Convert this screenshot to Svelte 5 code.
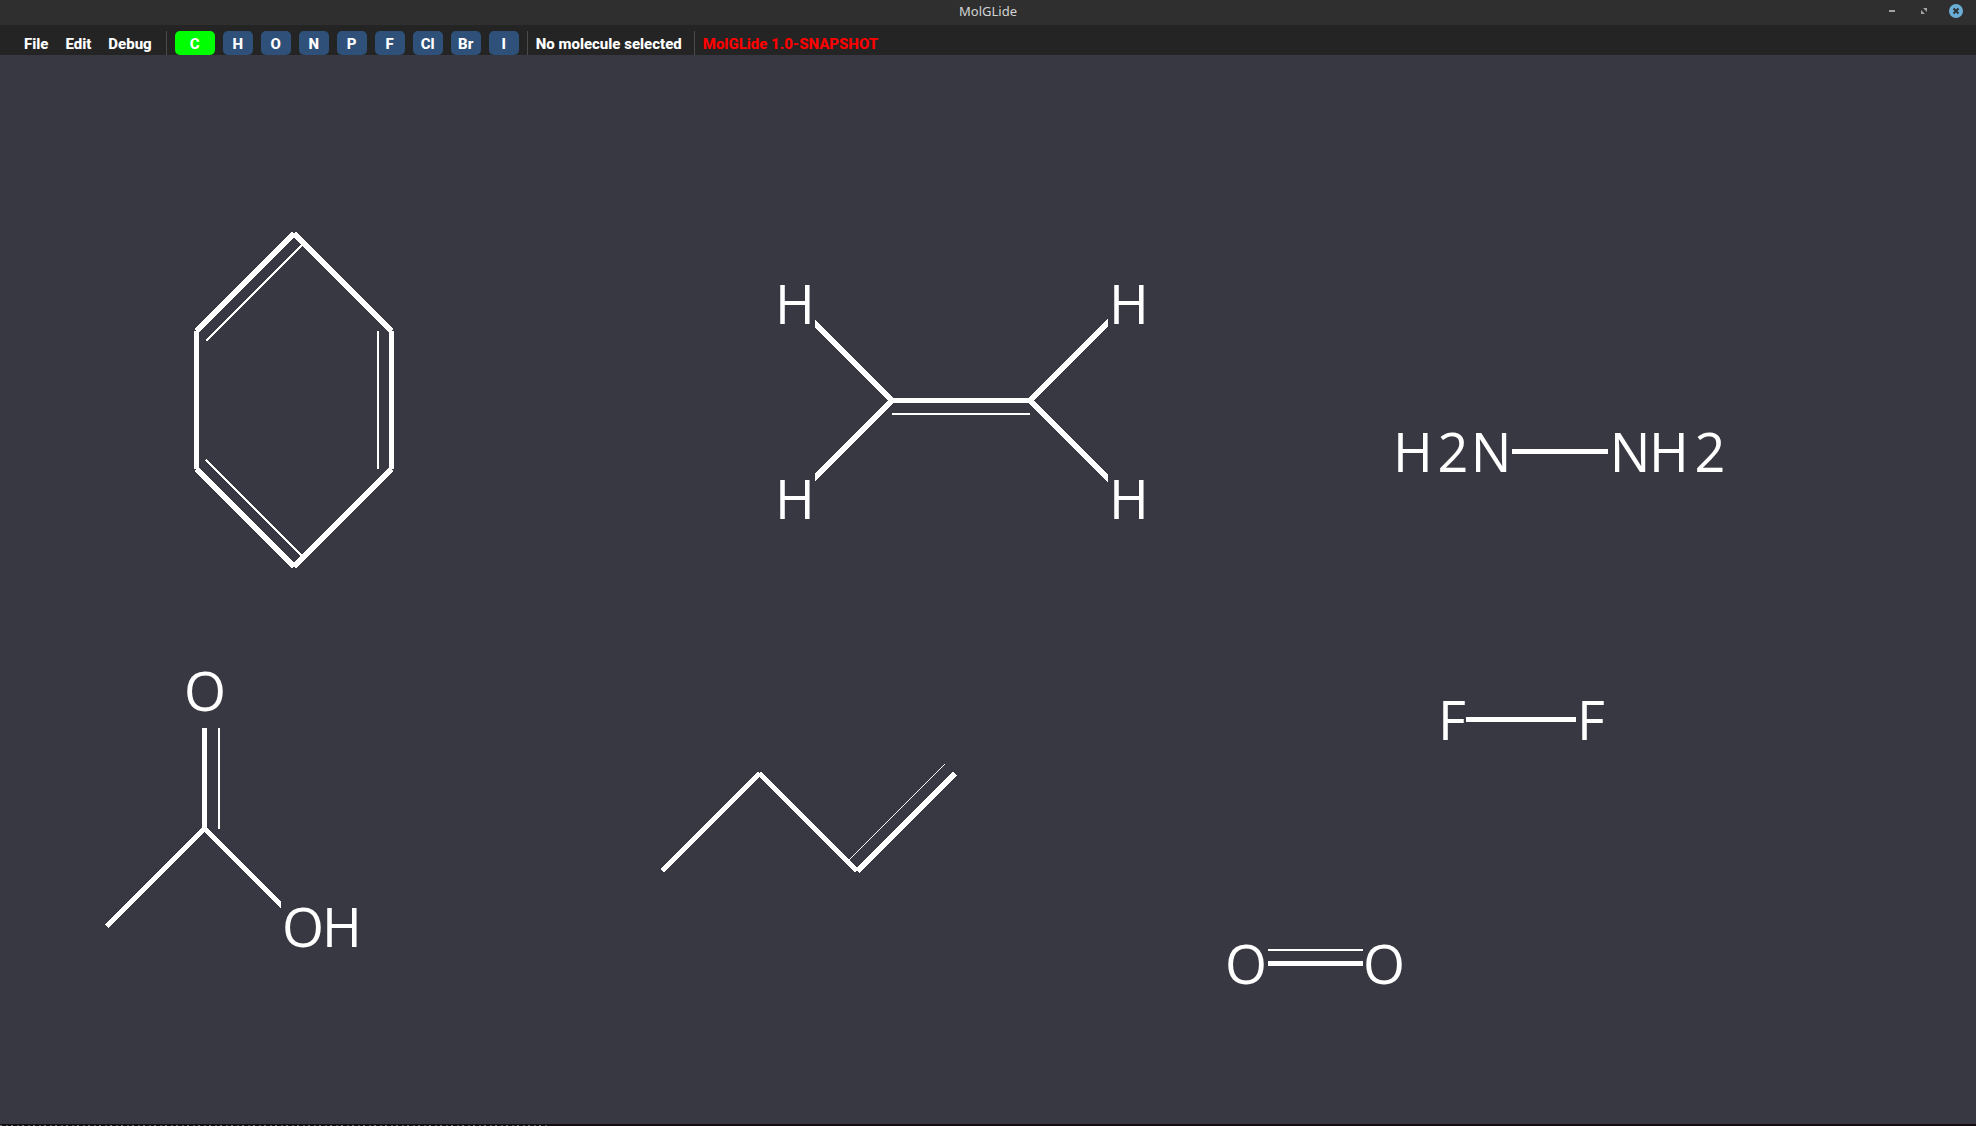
<script>
  const menus = ['File', 'Edit', 'Debug'];
  const elements = ['C', 'H', 'O', 'N', 'P', 'F', 'Cl', 'Br', 'I'];
  let active = $state('C');

  // Bonds are [x1, y1, x2, y2, width]; labels hold one x per letter;
  // clear is the box kept free of bonds around a label.
  const molecules = [
    {
      name: 'Benzene',
      bonds: [
        [294, 178.5, 196.5, 276, 5],
        [196.5, 276, 196.5, 414, 5],
        [196.5, 414, 294, 511.5, 5],
        [294, 511.5, 391.5, 414, 5],
        [391.5, 414, 391.5, 276, 5],
        [391.5, 276, 294, 178.5, 5],
        [303, 189, 206, 286, 2],
        [378, 276, 378, 414, 2],
        [206, 405, 302.5, 501.5, 2]
      ],
      labels: []
    },
    {
      name: 'Ethene',
      bonds: [
        [892, 345.5, 795, 248.5, 5],
        [892, 345.5, 795, 442.5, 5],
        [892, 345.5, 1030, 345.5, 5],
        [892, 359, 1030, 359, 2],
        [1030, 345.5, 1128, 247.5, 5],
        [1030, 345.5, 1128, 443.5, 5]
      ],
      labels: [
        { text: 'H', x: [795], y: 269, clear: [775, 40] },
        { text: 'H', x: [795], y: 464, clear: [775, 40] },
        { text: 'H', x: [1129], y: 269, clear: [1108, 40] },
        { text: 'H', x: [1129], y: 464, clear: [1108, 40] }
      ]
    },
    {
      name: 'Hydrazine',
      bonds: [[1512, 396.5, 1608, 396.5, 5]],
      labels: [
        { text: 'H2N', x: [1413, 1453, 1491], y: 417, clear: [1392, 120] },
        { text: 'NH2', x: [1630, 1669, 1710], y: 417, clear: [1608, 120] }
      ]
    },
    {
      name: 'Acetic acid',
      bonds: [
        [204.5, 673, 204.5, 774, 5],
        [219, 673, 219, 774, 2],
        [204.5, 773.5, 106.5, 871.5, 5],
        [204.5, 773.5, 302, 871, 5]
      ],
      labels: [
        { text: 'O', x: [205], y: 656, clear: [184, 42] },
        { text: 'OH', x: [303, 342], y: 892, clear: [281, 84] }
      ]
    },
    {
      name: 'But-1-ene',
      bonds: [
        [662, 816, 759.5, 718.5, 5],
        [759.5, 718.5, 857, 816, 5],
        [857.5, 816, 955, 718.5, 5],
        [848, 806, 945, 709, 1.4]
      ],
      labels: []
    },
    {
      name: 'Fluorine',
      bonds: [[1466, 664.5, 1576, 664.5, 5]],
      labels: [
        { text: 'F', x: [1452], y: 685, clear: [1436, 30] },
        { text: 'F', x: [1591], y: 685, clear: [1576, 30] }
      ]
    },
    {
      name: 'Oxygen',
      bonds: [
        [1268, 908.5, 1363, 908.5, 5],
        [1268, 895, 1363, 895, 2]
      ],
      labels: [
        { text: 'O', x: [1246], y: 929, clear: [1226, 42] },
        { text: 'O', x: [1384], y: 929, clear: [1363, 42] }
      ]
    }
  ];
</script>

<div class="window">
  <header class="titlebar">
    <h1>MolGLide</h1>
    <div class="controls">
      <button aria-label="Minimize">
        <svg width="14" height="14" viewBox="0 0 14 14"><path d="M4 6h6v2H4z" fill="#a3a3a3" /></svg>
      </button>
      <button aria-label="Maximize">
        <svg width="14" height="14" viewBox="0 0 14 14"><path d="M6 4h4v4zM4 6l4 4H4z" fill="#a3a3a3" /></svg>
      </button>
      <button aria-label="Close">
        <svg width="14" height="14" viewBox="0 0 14 14">
          <circle cx="7" cy="7" r="7" fill="#6aaed6" />
          <path d="M4.500 4.500l5 5M9.500 4.500l-5 5" stroke="#2d3338" stroke-width="2" />
        </svg>
      </button>
    </div>
  </header>

  <nav class="toolbar">
    <div class="menus">
      {#each menus as menu}
        <button class="menu">{menu}</button>
      {/each}
    </div>
    <div class="group">
      {#each elements as el}
        <button class="element" class:active={active === el} aria-pressed={active === el} onclick={() => (active = el)}>{el}</button>
      {/each}
    </div>
    <div class="group status">No molecule selected</div>
    <div class="group version">MolGLide 1.0-SNAPSHOT</div>
  </nav>

  <main>
    <svg class="canvas">
      {#each molecules as m}
        <g role="img" aria-label={m.name}>
          {#each m.bonds as [x1, y1, x2, y2, w]}
            <line {x1} {y1} {x2} {y2} stroke-width={w} />
          {/each}
          {#each m.labels as l}
            <rect x={l.clear[0]} y={l.y - 46} width={l.clear[1]} height="54" />
            <text x={l.x.join(' ')} y={l.y}>{l.text}</text>
          {/each}
        </g>
      {/each}
    </svg>
  </main>
  <div class="edge"><span></span></div>
</div>

<style>
  :global(body) {
    margin: 0;
    background: #383842;
  }
  .window {
    display: flex;
    flex-direction: column;
    min-height: 100vh;
    color: #fff;
    font-family: Roboto, sans-serif;
  }
  button {
    border: 0;
    margin: 0;
    padding: 0;
    background: none;
    color: inherit;
    font: inherit;
  }
  .titlebar {
    display: grid;
    grid-template-columns: 1fr auto 1fr;
    align-items: center;
    height: 25px;
    background: #2f2f2f;
  }
  h1 {
    grid-column: 2;
    margin: 0;
    padding-bottom: 3px;
    color: #d4d4d4;
    font: 400 13px/20px 'Noto Sans', sans-serif;
  }
  .controls {
    display: flex;
    justify-content: flex-end;
    gap: 18px;
    padding: 0 13px 3px 0;
  }
  .controls button {
    display: flex;
  }
  .toolbar {
    display: flex;
    box-sizing: border-box;
    height: 30px;
    padding: 6px 0 0 24px;
    background: #242424;
    font-size: 15px;
    font-weight: 800;
    line-height: 26px;
    white-space: nowrap;
  }
  .menus {
    display: flex;
    gap: 17px;
    padding-right: 14px;
  }
  .group {
    display: flex;
    gap: 8px;
    padding: 0 8px;
    border-left: 1px solid #4b4b4f;
  }
  .element {
    width: 30px;
    height: 24px;
    border-radius: 5px;
    background: #2f5078;
    line-height: 26px;
  }
  .element.active {
    width: 40px;
    background: #0f0;
  }
  .status {
    padding-right: 12px;
  }
  .version {
    color: #f00;
  }
  main {
    display: flex;
    flex: 1;
    background: #383842;
  }
  .canvas {
    flex: 1;
    min-height: 960px;
  }
  line {
    stroke: #fff;
    shape-rendering: crispEdges;
  }
  rect {
    fill: #383842;
  }
  text {
    fill: #fff;
    font-family: 'Open Sans', 'Noto Sans', sans-serif;
    font-size: 54px;
    text-anchor: middle;
  }
  .edge {
    height: 2px;
    background: #120c10;
  }
  .edge span {
    display: block;
    width: 547px;
    height: 1px;
    margin-top: 1px;
    background: repeating-linear-gradient(90deg, #777 0 2px, #120c10 2px 6px, #555 6px 8px, #120c10 8px 11px);
  }
</style>
